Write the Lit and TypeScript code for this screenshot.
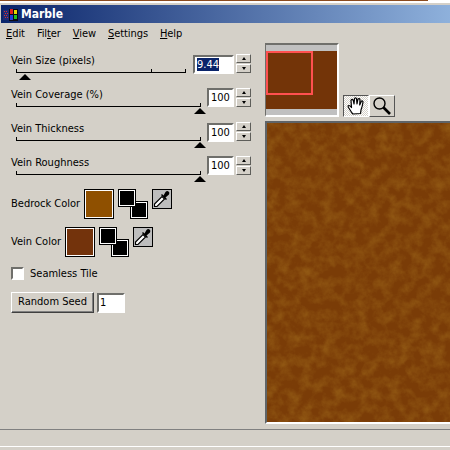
import { LitElement, html, css, svg } from "lit";
import { customElement } from "lit/decorators.js";

const FONT = css`"DejaVu Sans Condensed", "DejaVu Sans", sans-serif`;

const dropper = svg`<svg width="18" height="18" viewBox="0 0 18 18"><path d="M1.500 16.500 L1.500 14 L9 6.500 L11.500 9 L4 16.500 Z" fill="#fff" stroke="#000" stroke-width="1.200"/><path d="M8 5 L13 10 L14 9 L12.500 7.500 L16 4.500 Q17 2.500 15.500 1.500 Q14 .5 12.500 2 L10.500 5.500 L9 4 Z" fill="#000"/></svg>`;
const hand = svg`<svg width="20" height="20" viewBox="0 0 20 20"><path d="M6 17 L2.500 11.500 Q1.500 9.500 3 9.500 Q4 9.500 5.500 11.500 L5 4.500 Q5.500 3 6.500 3.500 Q7.500 4 8 8 L8.500 2.500 Q9.500 1.200 10.500 2.500 L11 8 L12 3 Q13 2 14 3.500 L13.700 9 L15.500 5 Q16.700 4.500 17 6 Q16.500 10 15 14 L14.500 17.500 L7 18 Z" fill="#fff" stroke="#000" stroke-width="1.200" stroke-linejoin="round"/></svg>`;
const glass = svg`<svg width="20" height="20" viewBox="0 0 20 20"><circle cx="7.500" cy="7.500" r="5.500" fill="#d4d0c8" stroke="#000" stroke-width="1.400"/><path d="M11.500 11.500 L18 18" stroke="#000" stroke-width="2.600"/></svg>`;
const logo = svg`<svg width="16" height="13" viewBox="0 0 16 13"><rect x="0" y="2" width="6" height="10" fill="#1b2a78"/><path d="M1 3h1v1H1zM3 3h1v1H3zM2 5h1v1H2zM4 5h1v1H4zM1 7h1v1H1zM3 7h1v1H3zM2 9h1v1H2zM4 9h1v1H4z" fill="#d83030"/><rect x="6" y="1" width="9" height="12" fill="#0a0a14"/><rect x="7" y="1" width="3" height="5" fill="#e02020"/><rect x="11" y="2" width="3" height="4" fill="#e8d800"/><rect x="7" y="7" width="3" height="5" fill="#2040e0"/><rect x="11" y="7" width="3" height="4" fill="#20c020"/></svg>`;

@customElement("app-slider")
class AppSlider extends LitElement {
  static properties = { label: {}, value: {}, wide: { type: Boolean }, tight: { type: Boolean }, thumb: { type: Number } };
  label = ""; value = ""; wide = false; tight = false; thumb = 0;
  static styles = css`
    :host { display: flex; height: 34px; font: 11px ${FONT}; color: #000; box-sizing: border-box; }
    .left { flex: 1; padding-left: 11px; padding-right: 6px; }
    .left.wide { padding-right: 7px; }
    .lab { height: 15px; line-height: 17px; white-space: nowrap; }
    .track { position: relative; margin: 2px 0 0 5px; height: 3px; border-bottom: 1px solid #000; border-left: 1px solid #000; border-right: 1px solid #000; }
    .tick { position: absolute; left: 134px; top: 0; height: 3px; width: 1px; background: #000; }
    .thumb { position: absolute; top: 5px; width: 0; height: 0; border-left: 6px solid transparent; border-right: 6px solid transparent; border-bottom: 6px solid #000; }
    .input { box-sizing: border-box; height: 19px; width: 27px; background: #fff; border: 2px solid; border-color: #6f6f6b #fff #fff #6f6f6b; font-size: 11px; line-height: 15px; padding-left: 2px; margin-top: 3px; }
    .input.wide { width: 41px; }
    .input.tight { margin-top: 2px; }
    .sel { background: #0a246a; color: #fff; }
    .spin { width: 15px; margin: 2px 0 0 2px; height: 19px; display: flex; flex-direction: column; gap: 1px; }
    .btn { flex: 1; background: #d4d0c8; border: 1px solid; border-color: #fff #5e5e5a #5e5e5a #fff; display: flex; align-items: center; justify-content: center; }
    .up { width: 0; height: 0; border-left: 2.500px solid transparent; border-right: 2.500px solid transparent; border-bottom: 3px solid #000; }
    .down { width: 0; height: 0; border-left: 2.500px solid transparent; border-right: 2.500px solid transparent; border-top: 3px solid #000; }
  `;
  render() {
    return html`<div class="left ${this.wide ? "wide" : ""}">
        <div class="lab">${this.label}</div>
        <div class="track">${this.wide ? html`<div class="tick"></div>` : ""}
          <div class="thumb" style="left:${this.thumb}px"></div></div>
      </div>
      <div class="input ${this.wide ? "wide" : ""} ${this.tight ? "tight" : ""}">${this.wide ? html`<span class="sel">${this.value}</span>` : this.value}</div>
      <div class="spin"><div class="btn"><div class="up"></div></div><div class="btn"><div class="down"></div></div></div>`;
  }
}

@customElement("app-root")
class AppRoot extends LitElement {
  static styles = css`
    :host { display: flex; flex-direction: column; width: 450px; height: 450px; overflow: hidden; background: #d4d0c8; font: 11px ${FONT}; color: #000; }
    .topstrip { height: 5px; flex: none; background: linear-gradient(#fff 0 1px, #fff 1px 3px, #d4d0c8 3px); position: relative; }
    .topstrip::before { content: ""; display: block; width: 428px; height: 1px; background: #8a4a1e; }
    .title { height: 18px; flex: none; margin-left: 1px; box-sizing: border-box; background: linear-gradient(90deg, #0a246a, #a6caf0 118%); color: #fff; font: bold 12px ${FONT}; display: flex; align-items: center; gap: 2px; padding-left: 2px; }
    .menu { height: 21px; flex: none; display: flex; gap: 12px; padding-left: 6px; align-items: center; }
    .menu span { letter-spacing: -0.080px; }
    .menu u { text-underline-offset: 1px; }
    .main { flex: 1; display: flex; min-height: 0; }
    .leftcol { width: 265px; flex: none; padding-top: 8px; display: flex; flex-direction: column; box-sizing: border-box; }
    app-slider { width: 251px; }
    .color { display: flex; height: 30px; padding-left: 11px; align-items: flex-start; }
    .color .lab { line-height: 30px; white-space: nowrap; }
    .swatch { width: 30px; height: 30px; box-sizing: border-box; border: 1px solid #000; outline: 1px solid #fff; outline-offset: -2px; }
    .pair { position: relative; width: 30px; height: 30px; margin-left: 4px; }
    .sm { position: absolute; width: 18px; height: 18px; box-sizing: border-box; background: #000; border: 1px solid #000; box-shadow: inset 0 0 0 1px #fff; }
    .sm.a { left: 0; top: 0; z-index: 1; }
    .sm.b { left: 12px; top: 12px; }
    .drop { width: 20px; height: 20px; box-sizing: border-box; margin-left: 4px; border: 1px solid #000; background: #bdbdbd; display: flex; align-items: center; justify-content: center; }
    .check { display: flex; align-items: center; gap: 6px; padding-left: 11px; height: 13px; margin-top: 10px; }
    .box { width: 13px; height: 13px; box-sizing: border-box; background: #fff; border: 2px solid; border-color: #6f6f6b #fff #fff #6f6f6b; }
    .seed { display: flex; padding-left: 11px; margin-top: 12px; gap: 3px; align-items: center; }
    .button { width: 83px; height: 21px; box-sizing: border-box; text-align: center; line-height: 18px; border: 1px solid; border-color: #fff #404040 #404040 #fff; box-shadow: inset -1px -1px 0 #808080; }
    .num { width: 28px; height: 20px; box-sizing: border-box; background: #fff; border: 2px solid; border-color: #6f6f6b #fff #fff #6f6f6b; line-height: 16px; padding-left: 1px; font-size: 11px; }
    .rightcol { flex: 1; min-width: 0; display: flex; flex-direction: column; margin-top: -1px; }
    .navrow { display: flex; align-items: flex-end; height: 74px; flex: none; }
    .thumb { position: relative; width: 74px; height: 74px; box-sizing: border-box; border: 2px solid; border-color: #6f6f6b #fff #fff #6f6f6b; border-left-width: 1px; background: #c0c0c0; display: flex; align-items: center; }
    .thumb .img { flex: 1; height: 58px; background: #733408; }
    .red { position: absolute; left: 0; top: 6px; width: 47px; height: 44px; box-sizing: border-box; border: 2px solid #ff5050; }
    .tools { display: flex; margin: 0 0 0 4px; }
    .tool { width: 26px; height: 22px; box-sizing: border-box; display: flex; align-items: center; justify-content: center; border: 1px solid; }
    .tool.on { border-color: #555 #fff #fff #555; background: repeating-conic-gradient(#fff 0 25%, #d4d0c8 0 50%) 0 0 / 2px 2px; }
    .tool.off { border-color: #fff #555 #555 #fff; }
    .preview { margin-top: 4px; height: 303px; flex: none; box-sizing: border-box; border: 2px solid; border-color: #5f6468 transparent #fff #5f6468; border-right: 0; background: #7c3f07; overflow: hidden; }
    .preview svg { display: block; }
    .status { height: 18px; margin-top: 5px; border-top: 1px solid #808080; border-bottom: 1px solid #fff; box-sizing: border-box; flex: none; }
    .foot { height: 3px; flex: none; }
  `;
  color(label: string, c: string, gap: number, top: number) {
    return html`<div class="color" style="margin-top:${top}px"><div class="lab" style="width:${gap}px">${label}</div>
      <div class="swatch" style="background:${c}"></div>
      <div class="pair"><div class="sm a"></div><div class="sm b"></div></div>
      <div class="drop">${dropper}</div></div>`;
  }
  render() {
    return html`
      <div class="topstrip"></div>
      <div class="title">${logo}<span>Marble</span></div>
      <div class="menu">
        <span><u>E</u>dit</span><span>Fil<u>t</u>er</span><span><u>V</u>iew</span><span><u>S</u>ettings</span><span><u>H</u>elp</span>
      </div>
      <div class="main">
        <div class="leftcol">
          <app-slider label="Vein Size (pixels)" value="9.44" wide .thumb=${2}></app-slider>
          <app-slider label="Vein Coverage (%)" value="100" tight .thumb=${177}></app-slider>
          <app-slider label="Vein Thickness" value="100" .thumb=${177}></app-slider>
          <app-slider label="Vein Roughness" value="100" tight .thumb=${177}></app-slider>
          ${this.color("Bedrock Color", "#8f5000", 73, 1)}
          ${this.color("Vein Color", "#73330c", 54, 8)}
          <label class="check"><span class="box"></span><span>Seamless Tile</span></label>
          <div class="seed"><div class="button">Random Seed</div><div class="num">1</div></div>
        </div>
        <div class="rightcol">
          <div class="navrow">
            <div class="thumb"><div class="img"></div><div class="red"></div></div>
            <div class="tools"><div class="tool on">${hand}</div><div class="tool off">${glass}</div></div>
          </div>
          <div class="preview">
            <svg width="185" height="301"><filter id="n" x="0" y="0" width="100%" height="100%"><feTurbulence type="fractalNoise" baseFrequency="0.09" numOctaves="4" seed="7"/><feColorMatrix type="matrix" values="0 0 0 0 0.58  0 0 0 0 0.33  0 0 0 0 0.03  0.55 0 0 0 -0.2"/></filter><rect width="185" height="301" fill="#7a3c07"/><rect width="185" height="301" filter="url(#n)"/></svg>
          </div>
        </div>
      </div>
      <div class="status"></div>
      <div class="foot"></div>`;
  }
}
